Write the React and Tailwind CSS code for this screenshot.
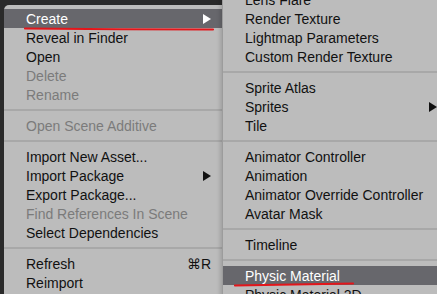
import React from 'react';

const font = { fontFamily: '"Liberation Sans", "DejaVu Sans", Arial, sans-serif' };

const leftItems = [
  { label: 'Create', active: true, arrow: true },
  { label: 'Reveal in Finder' },
  { label: 'Open' },
  { label: 'Delete', disabled: true },
  { label: 'Rename', disabled: true },
  { sep: true },
  { label: 'Open Scene Additive', disabled: true },
  { sep: true },
  { label: 'Import New Asset...' },
  { label: 'Import Package', arrow: true },
  { label: 'Export Package...' },
  { label: 'Find References In Scene', disabled: true },
  { label: 'Select Dependencies' },
  { sep: true },
  { label: 'Refresh', shortcut: '⌘R' },
  { label: 'Reimport' },
];

const rightItems = [
  { label: 'Lens Flare' },
  { label: 'Render Texture' },
  { label: 'Lightmap Parameters' },
  { label: 'Custom Render Texture' },
  { sep: true },
  { label: 'Sprite Atlas' },
  { label: 'Sprites', arrow: true },
  { label: 'Tile' },
  { sep: true },
  { label: 'Animator Controller' },
  { label: 'Animation' },
  { label: 'Animator Override Controller' },
  { label: 'Avatar Mask' },
  { sep: true },
  { label: 'Timeline' },
  { sep: true },
  { label: 'Physic Material', active: true },
  { label: 'Physic Material 2D' },
];

function Arrow({ white }) {
  return (
    <svg width="8" height="10" viewBox="0 0 8 10" className="shrink-0">
      <path d="M0 0 L8 5 L0 10 Z" fill={white ? '#ffffff' : '#111111'} />
    </svg>
  );
}

function MenuRow({ item }) {
  if (item.sep) {
    return (
      <div className="h-[12px] flex items-center">
        <div className="h-[2px] w-full bg-[#a8a8a8]" />
      </div>
    );
  }
  const color = item.active ? 'text-white bg-[#67676c]' : item.disabled ? 'text-[#7b7b7b]' : 'text-[#111111]';
  return (
    <div className={`h-[19px] flex items-center pl-[22px] pr-[11px] text-[14px] leading-none whitespace-nowrap ${color}`}>
      <span className="flex-1">{item.label}</span>
      {item.arrow && <Arrow white={item.active} />}
      {item.shortcut && <span>{item.shortcut}</span>}
    </div>
  );
}

export default function App() {
  return (
    <div className="relative w-[437px] h-[294px] overflow-hidden bg-[#2a2a2a]" style={font}>
      {/* main context menu */}
      <div className="absolute left-[4px] top-[5px] w-[218px] h-[300px] pt-[4px] bg-[#bcbcbc] rounded-tl-[5px]">
        {leftItems.map((item, i) => (
          <MenuRow key={i} item={item} />
        ))}
      </div>

      {/* Create submenu */}
      <div className="absolute left-[222px] top-[-10px] w-[226px] h-[320px] bg-[#bcbcbc] border-l border-[#9c9c9c] shadow-[-2px_0_4px_rgba(0,0,0,0.15)]">
        {rightItems.map((item, i) => (
          <MenuRow key={i} item={item} />
        ))}
      </div>

      {/* red annotation strokes */}
      <svg className="absolute left-0 top-0 pointer-events-none" width="437" height="294">
        <path d="M25 28.5 Q120 29.5 213 29.5" stroke="#e3161b" strokeWidth="2.2" fill="none" strokeLinecap="round" />
        <path d="M235 285.5 Q300 284.5 353 283.5" stroke="#e3161b" strokeWidth="2.2" fill="none" strokeLinecap="round" />
      </svg>
    </div>
  );
}
